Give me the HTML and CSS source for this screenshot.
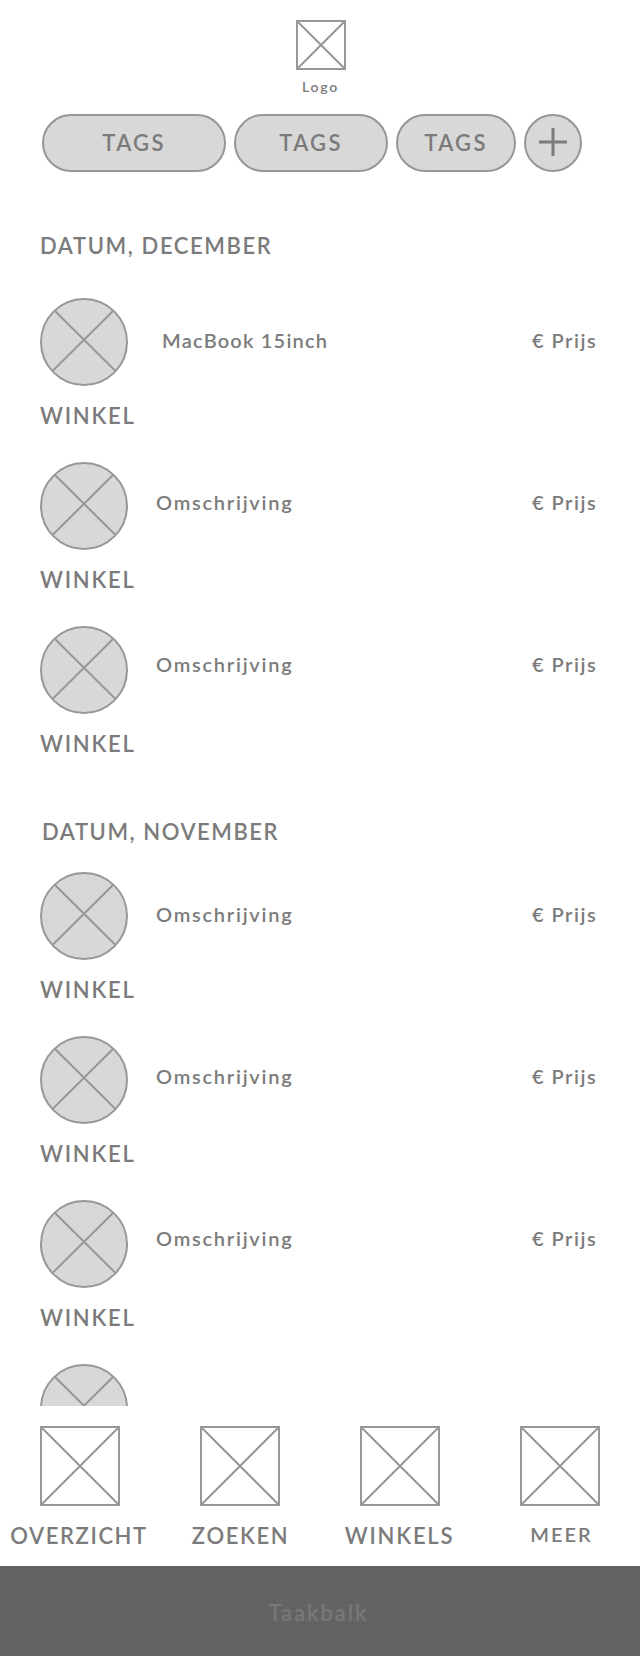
FILE: index.html
```html
<!DOCTYPE html>
<html lang="nl">
<head>
<meta charset="utf-8">
<title>Overzicht</title>
<link rel="stylesheet" href="styles.css">
</head>
<body>
<svg class="defs" aria-hidden="true">
  <symbol id="avatar" viewBox="0 0 88 88">
    <circle cx="44" cy="44" r="43" fill="#d8d8d8" stroke="#979797" stroke-width="2"/>
    <path d="M14.5 12.5 75.5 73M73.5 12.5 12.5 73" fill="none" stroke="#979797" stroke-width="2"/>
  </symbol>
  <symbol id="box" viewBox="0 0 80 80">
    <path d="M1 1H79V79H1ZM1.5 1.5 78.5 78.5M78.5 1.5 1.5 78.5" fill="none" stroke="#979797" stroke-width="2"/>
  </symbol>
</svg>
<header class="header">
  <svg class="logo" viewBox="0 0 50 50"><path d="M1 1H49V49H1ZM1.5 1.5 48.5 48.5M48.5 1.5 1.5 48.5" fill="none" stroke="#979797" stroke-width="2"/></svg>
  <div class="logo-label">Logo</div>
</header>
<div class="tags">
  <div class="tag tag-large">TAGS</div>
  <div class="tag tag-medium">TAGS</div>
  <div class="tag tag-small">TAGS</div>
  <div class="tag tag-add"><svg width="28" height="28" viewBox="0 0 28 28"><path d="M14 0V28M0 14H28" stroke="#7b7b7b" stroke-width="3"/></svg></div>
</div>
<main class="content">
  <section class="month">
    <h2 class="date">DATUM, DECEMBER</h2>
    <div class="purchases">
      <div class="shops">
        <div class="shop"><svg class="avatar"><use href="#avatar"/></svg><span>WINKEL</span></div>
        <div class="shop"><svg class="avatar"><use href="#avatar"/></svg><span>WINKEL</span></div>
        <div class="shop"><svg class="avatar"><use href="#avatar"/></svg><span>WINKEL</span></div>
      </div>
      <div class="descriptions">
        <div class="line product">MacBook 15inch</div>
        <div class="line">Omschrijving</div>
        <div class="line">Omschrijving</div>
      </div>
      <div class="prices">
        <div class="line">€ Prijs</div>
        <div class="line">€ Prijs</div>
        <div class="line">€ Prijs</div>
      </div>
    </div>
  </section>
  <section class="month month-next">
    <h2 class="date">DATUM, NOVEMBER</h2>
    <div class="purchases">
      <div class="shops">
        <div class="shop"><svg class="avatar"><use href="#avatar"/></svg><span>WINKEL</span></div>
        <div class="shop"><svg class="avatar"><use href="#avatar"/></svg><span>WINKEL</span></div>
        <div class="shop"><svg class="avatar"><use href="#avatar"/></svg><span>WINKEL</span></div>
        <div class="shop"><svg class="avatar"><use href="#avatar"/></svg></div>
      </div>
      <div class="descriptions">
        <div class="line">Omschrijving</div>
        <div class="line">Omschrijving</div>
        <div class="line">Omschrijving</div>
      </div>
      <div class="prices">
        <div class="line">€ Prijs</div>
        <div class="line">€ Prijs</div>
        <div class="line">€ Prijs</div>
      </div>
    </div>
  </section>
</main>
<nav class="nav">
  <div class="nav-item nav-overview"><svg class="nav-icon"><use href="#box"/></svg><span>OVERZICHT</span></div>
  <div class="nav-item nav-search"><svg class="nav-icon"><use href="#box"/></svg><span>ZOEKEN</span></div>
  <div class="nav-item nav-shops"><svg class="nav-icon"><use href="#box"/></svg><span>WINKELS</span></div>
  <div class="nav-item nav-more"><svg class="nav-icon"><use href="#box"/></svg><span>MEER</span></div>
</nav>
<footer class="taskbar">Taakbalk</footer>
</body>
</html>
```
FILE: styles.css
```css
* { box-sizing: border-box; }
body {
  margin: 0;
  width: 640px;
  background: #fff;
  color: #7b7b7b;
  font: 600 22px/30px Lato, "Open Sans", sans-serif;
}
svg { display: block; }
.defs { display: none; }

.header {
  height: 114px;
  padding: 20px 0 0 2px;
  display: flex;
  flex-direction: column;
  align-items: center;
}
.logo { width: 50px; height: 50px; }
.logo-label {
  margin-top: 8px;
  padding-right: 1px;
  font-size: 14px;
  line-height: 18px;
  letter-spacing: 1.8px;
}

.tags { display: flex; gap: 8px; padding-left: 42px; }
.tag {
  height: 58px;
  border: 2px solid #979797;
  border-radius: 29px;
  background: #d8d8d8;
  display: flex;
  align-items: center;
  justify-content: center;
  letter-spacing: 2.3px;
}
.tag-large { width: 184px; }
.tag-medium { width: 154px; }
.tag-small { width: 120px; }
.tag-add { width: 58px; padding-bottom: 2px; }

.content { height: 1234px; overflow: hidden; padding-top: 59px; }
.date {
  margin: 0 0 37px;
  padding-left: 40px;
  font: inherit;
  letter-spacing: 1.6px;
}
.month-next { padding-top: 27px; }
.month-next .date { margin-bottom: 25px; padding-left: 42px; letter-spacing: 1.55px; }
.purchases {
  display: grid;
  grid-template-columns: 116px 376px 108px;
  padding-left: 40px;
  align-items: start;
}
.shop { height: 164px; letter-spacing: 1.75px; }
.avatar { width: 88px; height: 88px; margin-bottom: 15px; }
.line {
  height: 162px;
  padding-top: 30px;
  font-size: 20px;
  line-height: 24px;
  letter-spacing: 1.75px;
  white-space: nowrap;
}
.prices .line { letter-spacing: 1.5px; }
.product { padding-left: 6px; letter-spacing: 1.2px; }

.nav {
  display: grid;
  grid-template-columns: repeat(4, 160px);
  height: 160px;
  padding-top: 20px;
}
.nav-item {
  display: flex;
  flex-direction: column;
  align-items: center;
  letter-spacing: 1.6px;
}
.nav-icon { width: 80px; height: 80px; margin-bottom: 15px; }
.nav-overview span { margin-right: 2px; }
.nav-search span { margin-left: 1px; }
.nav-shops { letter-spacing: 1.8px; }
.nav-shops span { margin-right: 1px; }
.nav-more { font-size: 20px; line-height: 28px; letter-spacing: 2px; }
.nav-more .nav-icon { margin-bottom: 14px; }
.nav-more span { margin-left: 3px; }

.taskbar {
  height: 90px;
  padding: 32px 3px 0 0;
  background: #636363;
  color: #787878;
  text-align: center;
  letter-spacing: 1.95px;
}
```
